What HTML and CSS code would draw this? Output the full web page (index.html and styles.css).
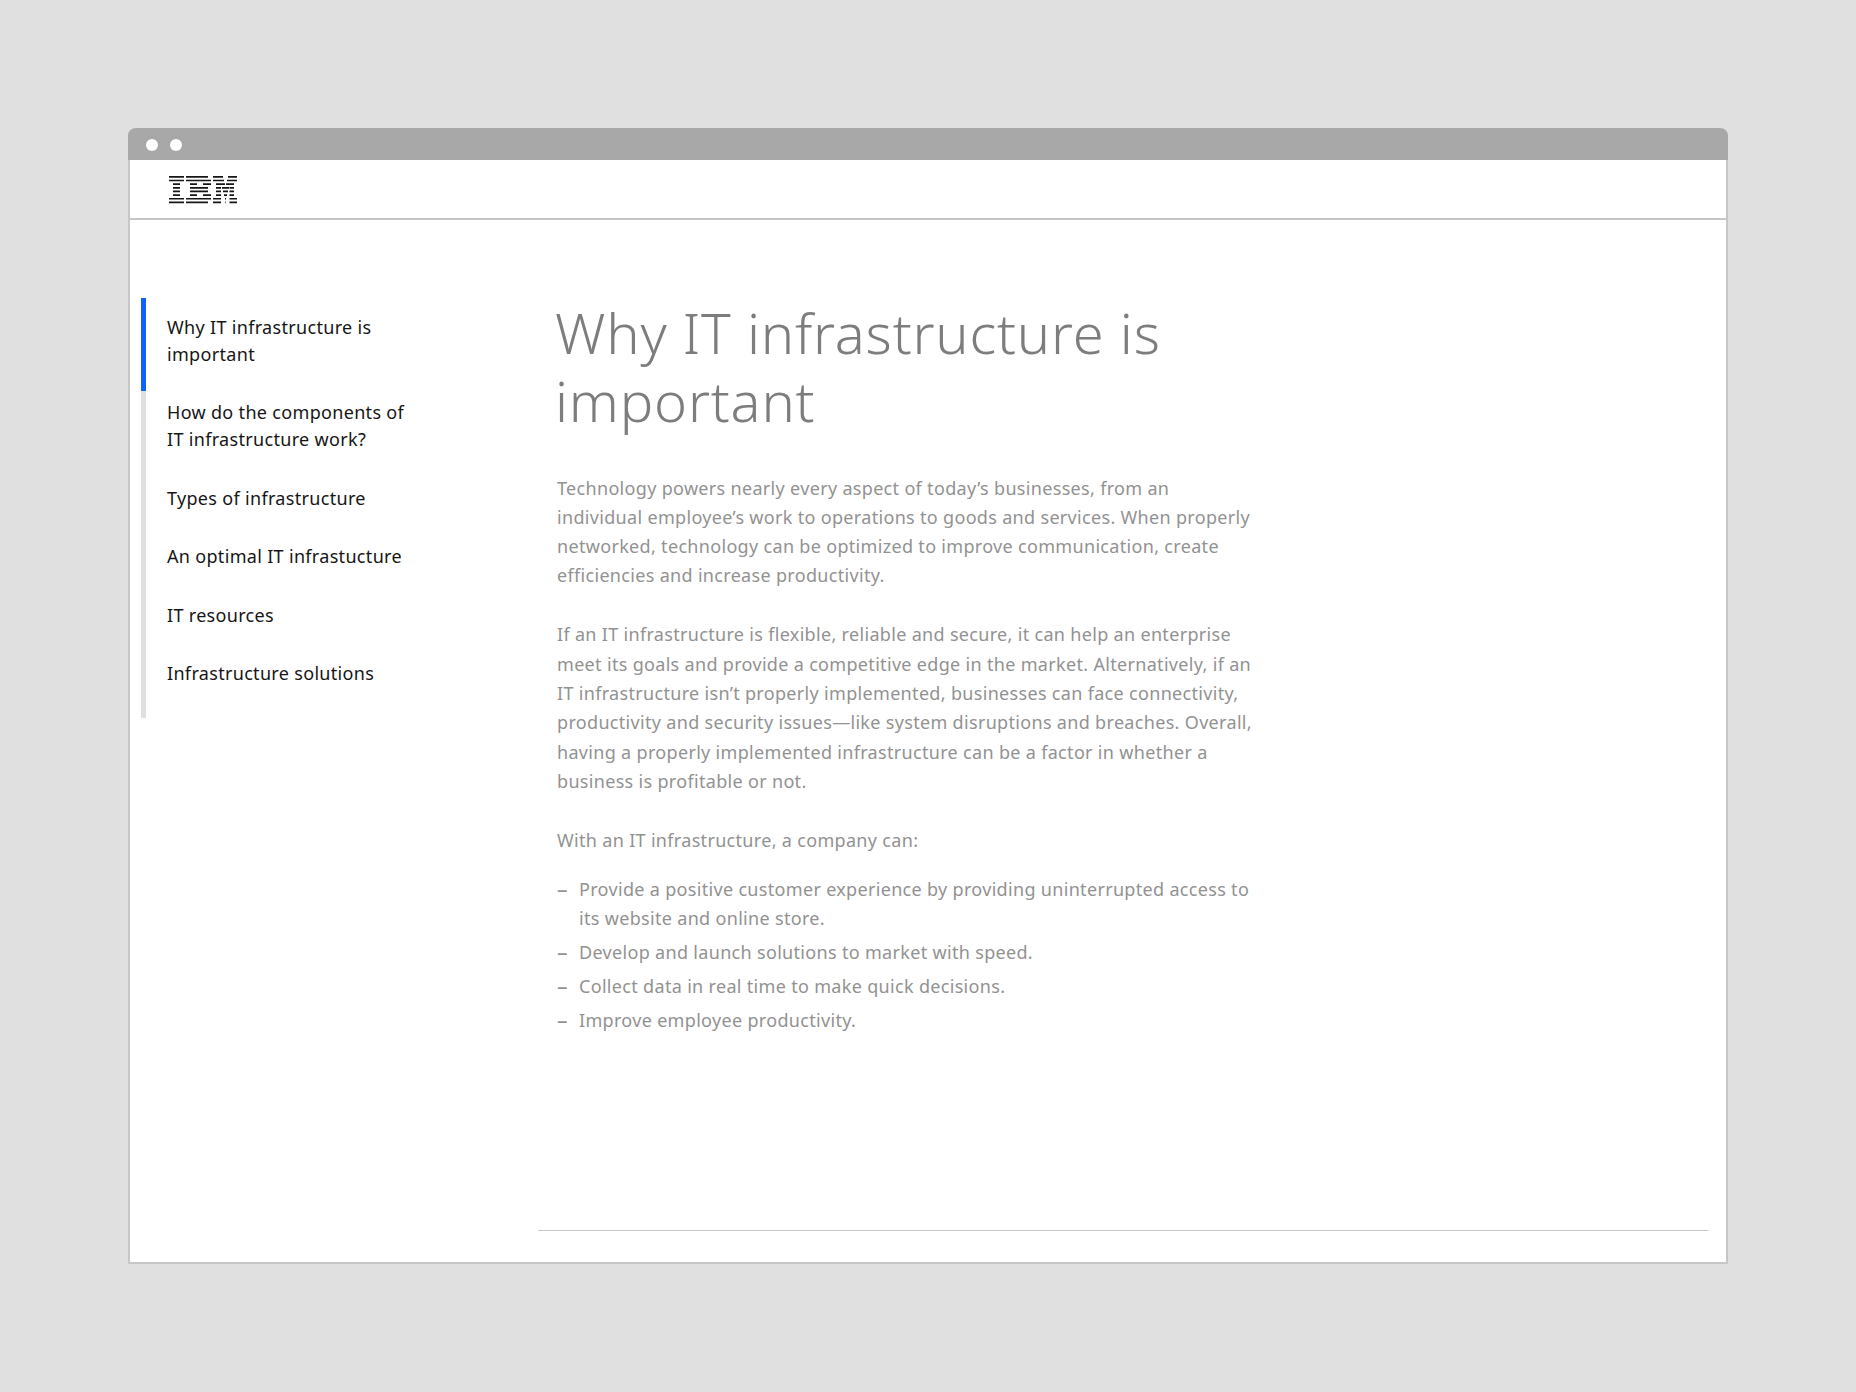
FILE: index.html
```html
<!DOCTYPE html>
<html lang="en">
<head>
    <meta charset="UTF-8">
    <meta name="viewport" content="width=device-width, initial-scale=1.0">
    <title>Why IT infrastructure is important</title>
    <link rel="stylesheet" href="styles.css">
</head>
<body>
    <div class="window">
        <!-- Title bar -->
        <div class="titlebar">
            <span class="dot"></span>
            <span class="dot"></span>
        </div>

        <!-- Masthead -->
        <header class="masthead">
            <svg class="logo" width="68" height="28" viewBox="0 0 68 28" role="img" aria-label="IBM">
                <g fill="#161616">
                    <path d="M0 0h15v1.7H0zM17 0h22v1.7H17zM44 0h10v1.7H44zM59 0h9v1.7H59z"/>
                    <path d="M0 3.65h15v1.7H0zM17 3.65h25v1.7H17zM44 3.65h11v1.7H44zM58 3.65h10v1.7H58z"/>
                    <path d="M4 7.3h7V9H4zM21 7.3h7V9h-7zM34 7.3h8V9h-8zM47 7.3h9V9H47zM57 7.3h8V9h-8z"/>
                    <path d="M4 10.95h7v1.7H4zM21 10.95h18v1.7H21zM47 10.95h5v1.7h-5zM53 10.95h7v1.7h-7zM60.500 10.95H65v1.7h-4.500z"/>
                    <path d="M4 14.6h7v1.7H4zM21 14.6h18v1.7H21zM47 14.6h5v1.7h-5zM54 14.6h5v1.7h-5zM60.500 14.6H65v1.7h-4.500z"/>
                    <path d="M4 18.25h7v1.7H4zM21 18.25h7v1.7h-7zM34 18.25h8v1.7h-8zM47 18.25h5v1.7h-5zM55 18.25h3v1.7h-3zM60.500 18.25H65v1.7h-4.500z"/>
                    <path d="M0 21.9h15v1.7H0zM17 21.9h25v1.7H17zM44 21.9h8v1.7h-8zM56 21.9h1v1.7h-1zM60.500 21.9H68v1.7h-7.500z"/>
                    <path d="M0 25.55h15v1.7H0zM17 25.55h22v1.7H17zM44 25.55h8v1.7h-8zM56.200 25.55h.6v1.7h-.6zM60.500 25.55H68v1.7h-7.500z"/>
                </g>
            </svg>
        </header>

        <div class="content">
            <!-- Table of contents -->
            <nav class="toc">
                <a class="toc-item active" href="#">Why IT infrastructure is important</a>
                <a class="toc-item" href="#">How do the components of IT infrastructure work?</a>
                <a class="toc-item" href="#">Types of infrastructure</a>
                <a class="toc-item" href="#">An optimal IT infrastucture</a>
                <a class="toc-item" href="#">IT resources</a>
                <a class="toc-item" href="#">Infrastructure solutions</a>
            </nav>

            <!-- Article -->
            <main class="article">
                <h1>Why IT infrastructure is important</h1>
                <div class="copy">
                    <p>Technology powers nearly every aspect of today’s businesses, from an individual employee’s work to operations to goods and services. When properly networked, technology can be optimized to improve communication, create efficiencies and increase productivity.</p>
                    <p>If an IT infrastructure is flexible, reliable and secure, it can help an enterprise meet its goals and provide a competitive edge in the market. Alternatively, if an IT infrastructure isn’t properly implemented, businesses can face connectivity, productivity and security issues—like system disruptions and breaches. Overall, having a properly implemented infrastructure can be a factor in whether a business is profitable or not.</p>
                    <p class="lead-in">With an IT infrastructure, a company can:</p>
                    <ul>
                        <li>Provide a positive customer experience by providing uninterrupted access to its website and online store.</li>
                        <li>Develop and launch solutions to market with speed.</li>
                        <li>Collect data in real time to make quick decisions.</li>
                        <li>Improve employee productivity.</li>
                    </ul>
                </div>
            </main>
        </div>

        <div class="footer-rule"></div>
    </div>
</body>
</html>
```

FILE: styles.css
```css
* {
    box-sizing: border-box;
}

body {
    margin: 0;
    height: 1392px;
    padding: 128px;
    background-color: #e0e0e0;
    font-family: 'Noto Sans', Arial, sans-serif;
    overflow: hidden;
}

.window {
    height: 1136px;
    background-color: #fff;
    border: 2px solid #c6c6c6;
    border-top: none;
    border-radius: 8px 8px 0 0;
    display: flex;
    flex-direction: column;
}

/* Title bar */
.titlebar {
    height: 32px;
    margin: 0 -2px;
    padding: 2px 0 0 17.5px;
    background-color: #a8a8a8;
    border-radius: 8px 8px 0 0;
    display: flex;
    align-items: center;
    gap: 12.5px;
}

.dot {
    width: 12px;
    height: 12px;
    border-radius: 50%;
    background-color: #fff;
}

/* Masthead */
.masthead {
    height: 60px;
    padding: 16px 0 0 39px;
    border-bottom: 2px solid #c6c6c6;
}

.logo {
    display: block;
}

/* Main area */
.content {
    flex: 1;
    display: flex;
    padding: 78px 0 0 11px;
}

.toc {
    width: 416px;
    height: 420px;
    flex-shrink: 0;
    display: flex;
    flex-direction: column;
    padding-right: 145px;
    background: linear-gradient(#e0e0e0, #e0e0e0) left top / 5px 420px no-repeat;
}

.toc-item {
    display: block;
    padding: 15.5px 0 16px 21px;
    border-left: 5px solid transparent;
    color: #161616;
    font-size: 18px;
    line-height: 27px;
    letter-spacing: 0.32px;
    text-decoration: none;
}

.toc-item.active {
    padding-bottom: 23.5px;
    margin-bottom: -7.5px;
    border-left-color: #0f62fe;
}

.article {
    width: 700px;
}

h1 {
    margin: 0 0 39.5px -2px;
    width: 640px;
    color: #7d7d7d;
    font-size: 56px;
    font-weight: 300;
    line-height: 68px;
    letter-spacing: 0.8px;
}

.copy {
    color: #929292;
    font-size: 18px;
    line-height: 29.3px;
    letter-spacing: 0.32px;
}

.copy p {
    margin: 0 0 29.8px;
}

.copy .lead-in {
    margin-bottom: 19.8px;
}

ul {
    list-style: none;
    margin: 0;
    padding: 0;
}

li {
    position: relative;
    padding-left: 22px;
    margin-bottom: 4.4px;
}

li::before {
    content: '\2013';
    position: absolute;
    left: 0;
    font-size: 21px;
}

.footer-rule {
    height: 1px;
    margin: 0 18px 31px 408px;
    background-color: #c6c6c6;
}
```
